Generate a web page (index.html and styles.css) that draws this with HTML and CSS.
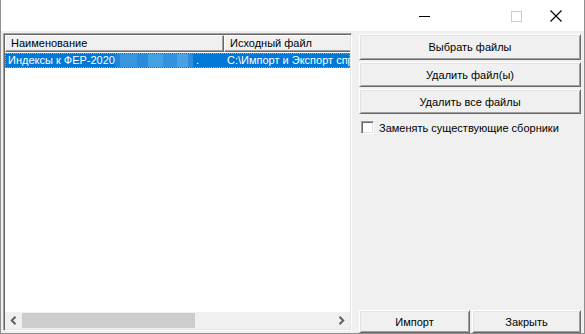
FILE: index.html
```html
<!DOCTYPE html>
<html lang="ru">
<head>
<meta charset="utf-8">
<title>Импорт</title>
<link rel="stylesheet" href="styles.css">
</head>
<body>
<div class="window">
  <div class="titlebar">
    <span class="cap cap-min"><svg width="11" height="1" viewBox="0 0 11 1"><rect width="11" height="1" fill="#000"/></svg></span>
    <span class="cap cap-max"><svg width="11" height="11" viewBox="0 0 11 11"><rect x="0.5" y="0.5" width="10" height="10" fill="none" stroke="#cccccc"/></svg></span>
    <span class="cap cap-close"><svg width="12" height="12" viewBox="0 0 12 12"><path d="M0.5 0.5 L11.5 11.5 M11.5 0.5 L0.5 11.5" stroke="#000" stroke-width="1.1"/></svg></span>
  </div>
  <div class="body">
    <div class="list">
      <div class="header">
        <div class="hcell hc1">Наименование</div>
        <div class="hcell hc2">Исходный файл</div>
      </div>
      <div class="rows">
        <div class="row selected">
          <div class="cell c1"><span>Индексы к ФЕР-2020</span><span class="blur"></span><span class="dot">.</span></div>
          <div class="cell c2">C:\Импорт и Экспорт справочников\Индексы</div>
        </div>
      </div>
      <div class="hscroll">
        <span class="arrow"><svg width="7" height="9" viewBox="0 0 7 9"><path d="M5.5 0.8 L1.8 4.5 L5.5 8.2" fill="none" stroke="#606060" stroke-width="2"/></svg></span>
        <div class="track"><div class="thumb"></div></div>
        <span class="arrow"><svg width="7" height="9" viewBox="0 0 7 9"><path d="M1.5 0.8 L5.2 4.5 L1.5 8.2" fill="none" stroke="#606060" stroke-width="2"/></svg></span>
      </div>
    </div>
    <div class="panel">
      <button class="btn btn-first">Выбрать файлы</button>
      <button class="btn">Удалить файл(ы)</button>
      <button class="btn">Удалить все файлы</button>
      <label class="check"><span class="box"></span><span>Заменять существующие сборники</span></label>
      <div class="spacer"></div>
      <div class="bottom">
        <button class="btn btn-import">Импорт</button>
        <button class="btn btn-close">Закрыть</button>
      </div>
    </div>
  </div>
</div>
</body>
</html>
```

FILE: styles.css
```css
html, body {
  margin: 0;
  padding: 0;
  background: #f0f0f0;
}
body {
  font-family: "Liberation Sans", Arial, sans-serif;
  font-size: 11px;
  color: #000;
}
.window {
  width: 585px;
  height: 334px;
  box-sizing: border-box;
  border-left: 1px solid #8f8f8f;
  border-right: 1px solid #8f8f8f;
  border-bottom: 1px solid #8f8f8f;
  display: flex;
  flex-direction: column;
  background: #f0f0f0;
}
.titlebar {
  height: 31px;
  flex: none;
  background: #fff;
  display: flex;
  align-items: center;
}
.cap {
  display: flex;
  align-items: center;
  justify-content: center;
}
.cap-min { margin-left: 418px; margin-top: 1px; }
.cap-max { margin-left: 81px; margin-top: 1px; }
.cap-close { margin-left: 28px; margin-top: 1px; }
.body {
  flex: 1;
  display: flex;
  padding: 2px 4px 0 2px;
  min-height: 0;
}
.list {
  width: 349px;
  box-sizing: border-box;
  margin-bottom: 2px;
  border-top: 1px solid #a0a0a0;
  border-left: 1px solid #a0a0a0;
  border-right: 1px solid #ffffff;
  border-bottom: 1px solid #ffffff;
  box-shadow: inset 1px 1px 0 #696969, inset -1px -1px 0 #e3e3e3;
  padding: 1px;
  display: flex;
  flex-direction: column;
  background: #fff;
}
.header {
  display: flex;
  height: 17px;
  flex: none;
  overflow: hidden;
  background: #f0f0f0;
}
.hcell {
  box-sizing: border-box;
  height: 17px;
  line-height: 15px;
  padding-left: 5px;
  border-top: 1px solid #fff;
  border-left: 1px solid #fff;
  border-right: 1px solid #696969;
  border-bottom: 1px solid #696969;
  box-shadow: inset -1px -1px 0 #a0a0a0;
  white-space: nowrap;
  flex: none;
}
.hc1 { width: 219px; }
.hc2 { width: 200px; }
.rows {
  flex: 1;
  padding-top: 1px;
  overflow: hidden;
}
.row {
  display: flex;
  height: 15px;
  white-space: nowrap;
}
.row.selected {
  background: #0078d7;
  color: #fff;
  outline: 1px dotted #ff8a1e;
  outline-offset: -1px;
  width: 345px;
  overflow: hidden;
}
.cell {
  line-height: 15px;
  box-sizing: border-box;
  flex: none;
}
.c1 {
  width: 219px;
  padding-left: 3px;
  display: flex;
  align-items: center;
}
.c2 { padding-left: 3px; }
.blur {
  display: inline-block;
  width: 78px;
  height: 13px;
  margin-left: 0;
  background: linear-gradient(90deg, #1c84d9 0 6%, #3a95df 6% 28%, #2a8bdc 28% 42%, #45a0e3 42% 62%, #3391dd 62% 80%, #4aa2e3 80% 93%, #2d8cdb 93% 100%);
}
.dot { margin-left: 3px; }
.hscroll {
  height: 17px;
  flex: none;
  display: flex;
  align-items: center;
  background: #f0f0f0;
}
.arrow {
  width: 17px;
  height: 17px;
  display: flex;
  align-items: center;
  justify-content: center;
  flex: none;
}
.track {
  flex: 1;
  height: 17px;
  display: flex;
}
.thumb {
  width: 173px;
  height: 15px;
  margin-top: 1px;
  background: #cdcdcd;
}
.panel {
  width: 222px;
  margin-left: 7px;
  display: flex;
  flex-direction: column;
}
.btn {
  font: inherit;
  color: #000;
  background: #f0f0f0;
  height: 25px;
  box-sizing: border-box;
  border-style: solid;
  border-width: 1px;
  border-color: #ffffff #696969 #696969 #ffffff;
  box-shadow: inset 1px 1px 0 #e3e3e3, inset -1px -1px 0 #a0a0a0;
  padding: 0;
  margin: 0;
  flex: none;
}
.btn + .btn { margin-top: 2px; }
.btn-first { margin-top: 1px; height: 26px; }
.check {
  display: flex;
  align-items: center;
  margin-top: 7px;
  margin-left: 2px;
  height: 13px;
  white-space: nowrap;
}
.box {
  width: 13px;
  height: 13px;
  box-sizing: border-box;
  background: #fff;
  border-top: 1px solid #a0a0a0;
  border-left: 1px solid #a0a0a0;
  border-right: 1px solid #fff;
  border-bottom: 1px solid #fff;
  box-shadow: inset 1px 1px 0 #696969, inset -1px -1px 0 #e3e3e3;
  margin-right: 5px;
  flex: none;
}
.spacer { flex: 1; }
.bottom {
  display: flex;
  gap: 2px;
  height: 23px;
}
.bottom .btn { height: 23px; margin-top: 0; }
.btn-import { width: 111px; }
.btn-close { width: 109px; }
```
